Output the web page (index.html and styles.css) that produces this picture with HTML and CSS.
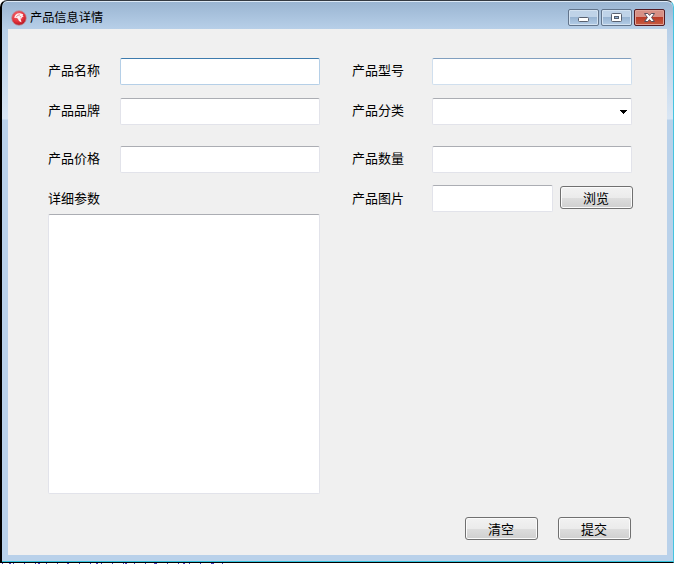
FILE: index.html
```
<!DOCTYPE html>
<html lang="zh-CN">
<head>
<meta charset="utf-8">
<title>产品信息详情</title>
<link rel="stylesheet" href="styles.css">
</head>
<body>
<div class="window">
  <header class="titlebar">
    <svg class="logo" width="16" height="16" viewBox="0 0 16 16">
      <defs><radialGradient id="red" cx=".4" cy=".3" r=".75"><stop offset="0" stop-color="#f36b70"/><stop offset=".6" stop-color="#e3313b"/><stop offset="1" stop-color="#a9131c"/></radialGradient></defs>
      <circle cx="8" cy="8" r="7.300" fill="url(#red)" stroke="#b98f9c" stroke-width=".8"/>
      <path d="M3.300 8C3.600 5 6 3 9 3.200L12.300 4.200 11.500 5.200 12.600 6.400 11 7.200 11.200 8.300 9.500 8.500 10.500 12.300C8.500 11.500 7.300 10.500 7 8.700L5.300 7.700Z" fill="#fff" fill-opacity=".92"/>
      <path d="M5.300 7Q6.300 4.700 9 4.800M8.800 6.300L10.300 7.200" fill="none" stroke="#e86a70" stroke-width=".8"/>
    </svg>
    <h1>产品信息详情</h1>
    <div class="controls">
      <button class="control" aria-label="最小化"><svg width="31" height="17" viewBox="0 0 31 17"><rect x="10.500" y="8.500" width="10" height="4" rx="1" fill="#fff" stroke="#58606f"/></svg></button>
      <button class="control" aria-label="最大化"><svg width="31" height="17" viewBox="0 0 31 17"><rect x="10.500" y="4.500" width="10" height="8" rx="1" fill="#fff" stroke="#58606f"/><rect x="13.500" y="7.500" width="4" height="2" fill="#8fb0d2" stroke="#58606f"/></svg></button>
      <button class="control close" aria-label="关闭"><svg width="31" height="17" viewBox="0 0 31 17"><path d="M10.500 4.500H13.800L15.500 6.400 17.200 4.500H20.500L17.600 8.500 20.500 12.500H17.200L15.500 10.600 13.800 12.500H10.500L13.400 8.500Z" fill="#fff" stroke="#584d5a" stroke-width="1" stroke-linejoin="round"/></svg></button>
    </div>
  </header>
  <main class="client">
    <div class="columns">
      <section class="column">
        <div class="row"><label>产品名称</label><span class="field focused"></span></div>
        <div class="row tall"><label>产品品牌</label><span class="field"></span></div>
        <div class="row"><label>产品价格</label><span class="field"></span></div>
        <div class="row"><label>详细参数</label></div>
        <div class="field area"></div>
      </section>
      <section class="column wide">
        <div class="row"><label>产品型号</label><span class="field hover"></span></div>
        <div class="row tall"><label>产品分类</label><span class="field select"><svg width="7" height="4" viewBox="0 0 7 4" shape-rendering="crispEdges"><path d="M0 0H7V1H6V2H5V3H4V4H3V3H2V2H1V1H0Z"/></svg></span></div>
        <div class="row"><label>产品数量</label><span class="field"></span></div>
        <div class="row picture"><label>产品图片</label><span class="field path"></span><button class="button">浏览</button></div>
      </section>
    </div>
    <footer class="actions"><button class="button">清空</button><button class="button">提交</button></footer>
  </main>
</div>
<div class="backdrop"></div>
</body>
</html>
```
FILE: styles.css
```
* { box-sizing: border-box; }
body {
  margin: 0;
  height: 564px;
  overflow: hidden;
  background: #fff;
  color: #000;
  font: 13px/18px "Noto Sans CJK SC", sans-serif;
}
.window {
  height: 563px;
  display: flex;
  flex-direction: column;
  padding: 0 6px 7px;
  border: 1px solid #000;
  border-left-width: 2px;
  border-right: 1px solid #45c4e0;
  border-top-color: #343a42;
  border-radius: 7px 7px 0 0;
  box-shadow: inset 0 -1px #32c2dc, inset 0 1px #dce9f6;
  background: linear-gradient(#99b4d1 0, #b7cfe8 28px, #d9e6f4 118px, #b9d1ea 119px);
}
.titlebar {
  height: 28px;
  flex: none;
  display: flex;
  align-items: flex-start;
  padding-left: 3px;
}
.logo { margin-top: 9px; }
h1 {
  margin: 7px 0 0 3px;
  font-size: 12.200px;
  line-height: 18px;
  font-weight: 400;
}
.controls {
  margin: 8px 2px 0 auto;
  display: flex;
  gap: 2px;
}
.control {
  width: 31px;
  height: 17px;
  padding: 0;
  border: 1px solid #62748b;
  border-radius: 2px;
  box-shadow: inset 0 0 0 1px #d3e2f1;
  background: linear-gradient(#bfd3e8 48%, #98b4d2 50%, #b4cde7);
}
.control svg { display: block; margin: -1px; }
.close {
  border-color: #551c24;
  box-shadow: inset 0 0 0 1px #e0a398;
  background: linear-gradient(#d79085 45%, #bb3b27 50%, #c65c42);
}
.client {
  flex: 1;
  width: 659px;
  display: flex;
  flex-direction: column;
  padding: 29px 35px 15px 40px;
  background: #f0f0f0;
}
.columns { display: flex; gap: 32px; }
.column { width: 272px; flex: none; }
.wide { width: 280px; }
.row {
  display: flex;
  height: 27px;
  margin-bottom: 13px;
}
.tall { margin-bottom: 21px; }
.picture { margin-top: -1px; }
label {
  width: 72px;
  flex: none;
  padding-top: 3px;
}
.wide label { width: 80px; }
.picture label { padding-top: 4px; }
.field {
  width: 200px;
  height: 27px;
  background: #fff;
  border: 1px solid #e2e3ea;
  border-top-color: #abadb3;
  border-radius: 2px;
}
.focused { border-color: #b5cfe7; border-top-color: #3d7bad; }
.hover { border-color: #d0dfee; border-top-color: #819fbf; }
.area {
  width: 272px;
  height: 280px;
  margin-top: -12px;
}
.select {
  display: flex;
  align-items: center;
  justify-content: flex-end;
  padding-right: 4px;
}
.path { width: 121px; flex: none; margin-right: 7px; }
.button {
  width: 73px;
  height: 23px;
  flex: none;
  padding: 0 1px 0 0;
  border: 1px solid #707070;
  border-radius: 3px;
  box-shadow: inset 0 0 0 1px #fbfbfb;
  background: linear-gradient(#f2f2f2, #ebebeb 50%, #dddddd 52%, #cfcfcf);
  color: #000;
  font: 13px/18px "Noto Sans CJK SC", sans-serif;
}
.picture .button { margin-top: 1px; }
.actions {
  display: flex;
  justify-content: flex-end;
  gap: 20px;
  margin-top: auto;
  padding-right: 1px;
}
.backdrop {
  width: 224px;
  height: 1px;
  background:
    linear-gradient(90deg, transparent 2px, #3939b8 2px, #3939b8 3px, transparent 3px) 0 0 / 11px 1px repeat-x,
    linear-gradient(90deg, transparent 9px, #6a3ac0 9px, #3939b8 11px, transparent 11px) 0 0 / 29px 1px repeat-x;
}
```
